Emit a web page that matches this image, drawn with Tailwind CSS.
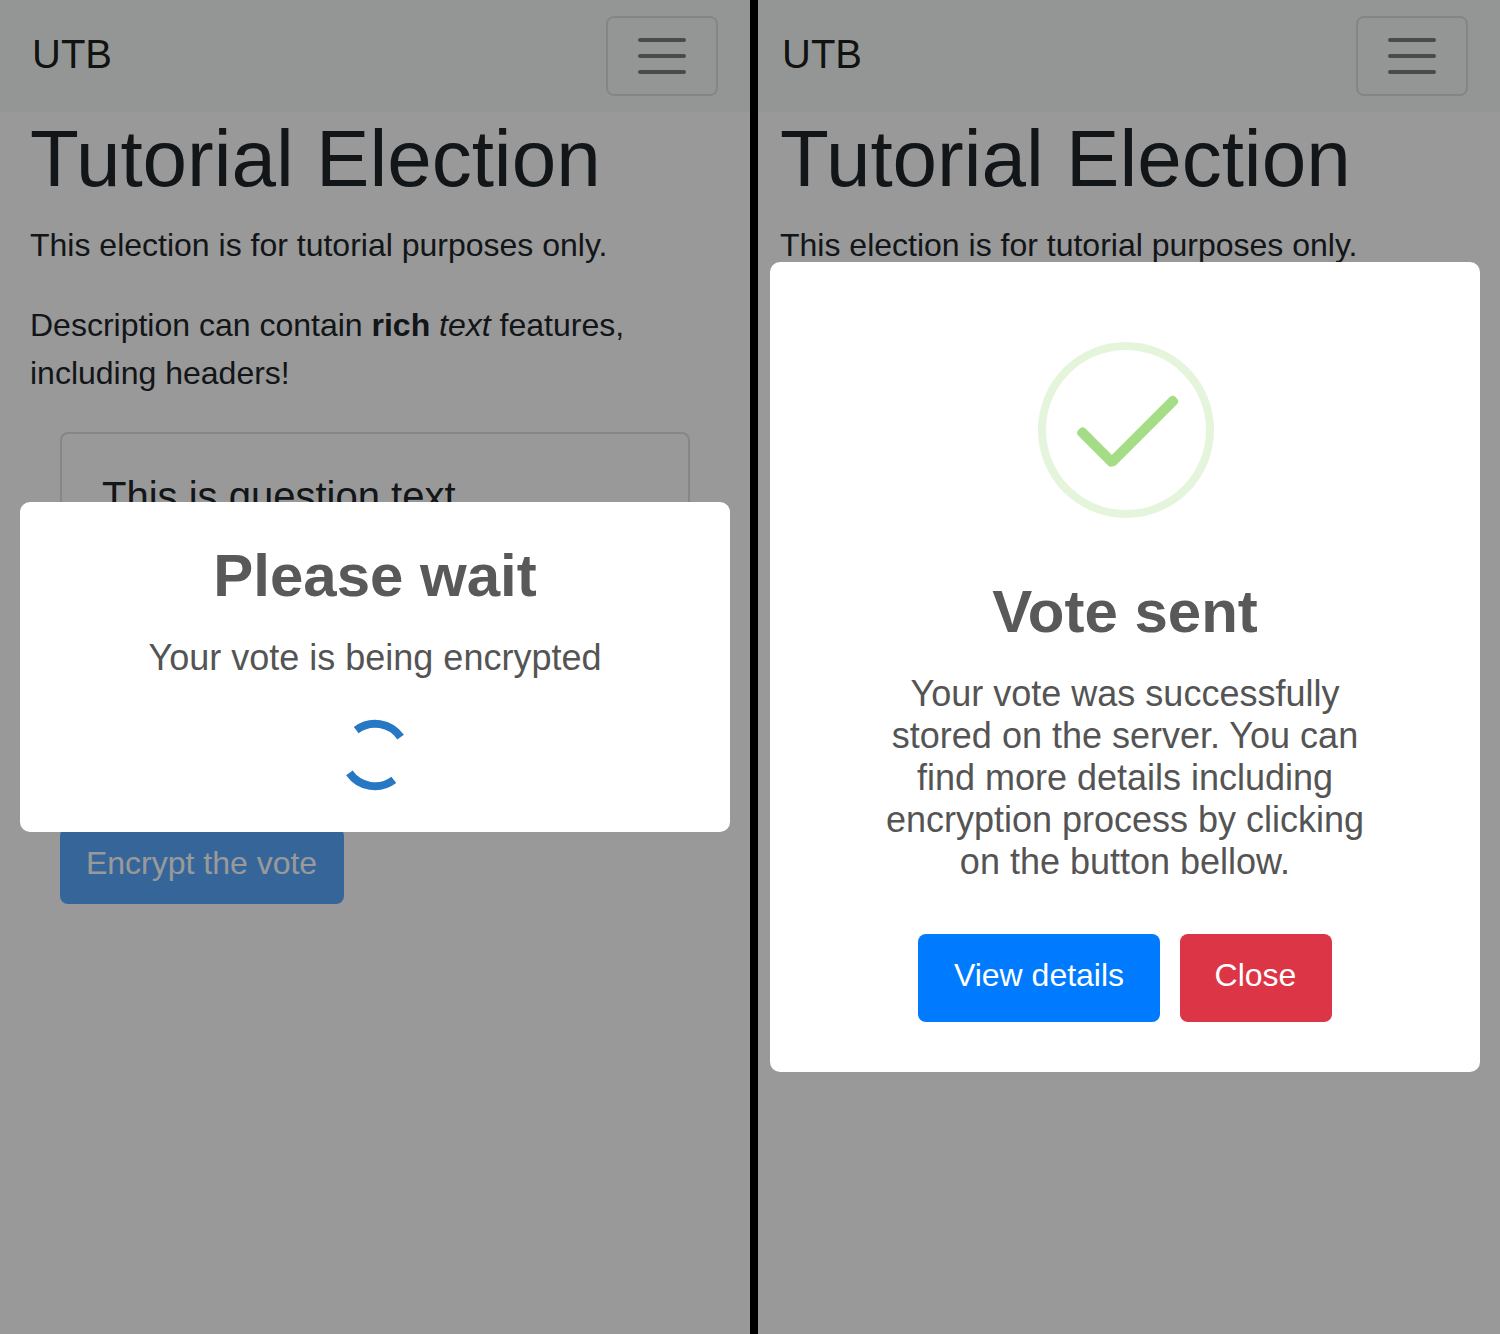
<!DOCTYPE html>
<html lang="en">
<head>
<meta charset="utf-8">
<title>Tutorial Election</title>
<script src="https://cdn.jsdelivr.net/npm/@tailwindcss/browser@4"></script>
</head>
<body class="grid h-[1334px] w-[1500px] grid-cols-2 overflow-hidden bg-white font-['Liberation_Sans',Arial,sans-serif] text-[32px] leading-[48px] text-[#212529]">

  <!-- Encrypting step -->
  <section class="relative h-[1334px] overflow-hidden">
    <nav class="flex h-28 items-center justify-between bg-[#f7faf8] px-8">
      <a class="pb-1 text-[40px] leading-[60px] text-black/90">UTB</a>
      <button class="flex h-20 w-28 flex-col items-center justify-center gap-3 rounded-lg border-2 border-black/10" aria-label="Menu">
        <span class="h-1 w-12 rounded-full bg-black/50"></span>
        <span class="h-1 w-12 rounded-full bg-black/50"></span>
        <span class="h-1 w-12 rounded-full bg-black/50"></span>
      </button>
    </nav>
    <main class="px-[30px]">
      <h1 class="mb-[15px] text-[80px] leading-[94px]">Tutorial Election</h1>
      <p class="mb-8">This election is for tutorial purposes only.</p>
      <p class="mb-[35px]">Description can contain <b>rich</b> <i>text</i> features, including headers!</p>
      <div class="px-[30px]">
        <div class="h-[364px] rounded-lg border-2 border-black/[.125] px-10 pt-[38px]">
          <h5 class="text-[40px] leading-12">This is question text</h5>
        </div>
        <button class="mt-8 h-[76px] w-[284px] rounded-lg bg-[#59a9ff] pr-px pb-1.5 text-white">Encrypt the vote</button>
      </div>
    </main>
    <div class="absolute inset-0 flex items-center bg-black/40 px-5">
      <div class="flex h-[330px] w-full flex-col items-center rounded-[10px] bg-white pt-10">
        <h2 class="text-[60px] leading-[68px] font-bold text-[#595959]">Please wait</h2>
        <p class="mt-[27px] text-[36px] leading-[42px] text-[#545454]">Your vote is being encrypted</p>
        <svg class="mt-10 size-[72px]" viewBox="-36 -36 72 72" fill="none" stroke="#2778c4" stroke-width="8">
          <path d="M-18.8-24.9A31.2 31.2 0 0 1 25.6-17.9"/>
          <path d="M18.8 24.9A31.2 31.2 0 0 1-25.6 17.9"/>
        </svg>
      </div>
    </div>
  </section>

  <!-- Vote sent step -->
  <section class="relative h-[1334px] overflow-hidden">
    <nav class="flex h-28 items-center justify-between bg-[#f7faf8] px-8">
      <a class="pb-1 text-[40px] leading-[60px] text-black/90">UTB</a>
      <button class="flex h-20 w-28 flex-col items-center justify-center gap-3 rounded-lg border-2 border-black/10" aria-label="Menu">
        <span class="h-1 w-12 rounded-full bg-black/50"></span>
        <span class="h-1 w-12 rounded-full bg-black/50"></span>
        <span class="h-1 w-12 rounded-full bg-black/50"></span>
      </button>
    </nav>
    <main class="px-[30px]">
      <h1 class="mb-[15px] text-[80px] leading-[94px]">Tutorial Election</h1>
      <p>This election is for tutorial purposes only.</p>
    </main>
    <div class="absolute inset-0 flex items-center bg-black/40 px-5">
      <div class="flex h-[810px] w-full flex-col items-center rounded-[10px] bg-white pt-20">
        <svg class="ml-0.5 size-44" viewBox="0 0 176 176">
          <circle cx="88" cy="88" r="84" fill="none" stroke="#e4f5db" stroke-width="8"/>
          <rect x="33.8" y="100" width="50" height="10" rx="4" fill="#a5dc86" transform="rotate(45 58.8 105)"/>
          <rect x="58" y="84" width="94" height="10" rx="4" fill="#a5dc86" transform="rotate(-45 105 89)"/>
        </svg>
        <h2 class="mt-[60px] text-[60px] leading-[68px] font-bold text-[#595959]">Vote sent</h2>
        <p class="mt-[27px] w-[500px] text-center text-[36px] leading-[42px] text-[#545454]">Your vote was successfully stored on the server. You can find more details including encryption process by clicking on the button bellow.</p>
        <div class="mt-[51px] flex gap-5 text-white">
          <button class="h-[88px] w-[242px] rounded-lg bg-[#007bff] pb-1.5">View details</button>
          <button class="h-[88px] w-[152px] rounded-lg bg-[#dc3545] pr-px pb-1.5">Close</button>
        </div>
      </div>
    </div>
    <div class="absolute inset-y-0 left-0 w-2 bg-black"></div>
  </section>
</body>
</html>
